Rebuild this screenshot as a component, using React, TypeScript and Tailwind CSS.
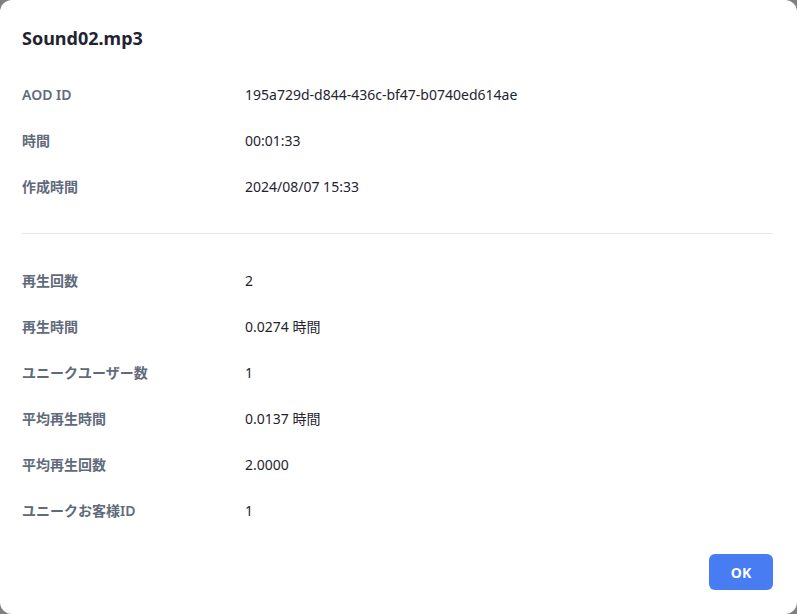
import React from "react";

const group1: [string, string][] = [
  ["AOD ID", "195a729d-d844-436c-bf47-b0740ed614ae"],
  ["時間", "00:01:33"],
  ["作成時間", "2024/08/07 15:33"],
];

const group2: [string, string][] = [
  ["再生回数", "2"],
  ["再生時間", "0.0274 時間"],
  ["ユニークユーザー数", "1"],
  ["平均再生時間", "0.0137 時間"],
  ["平均再生回数", "2.0000"],
  ["ユニークお客様ID", "1"],
];

function Row({ label, value }: { label: string; value: string }) {
  return (
    <div className="flex h-[46px] items-center pt-px">
      <div className="w-[223px] shrink-0 text-[14px] font-semibold text-[#5f6b7b]">{label}</div>
      <div className="text-[14px] text-[#1f2430]">{value}</div>
    </div>
  );
}

export default function App() {
  return (
    <div
      className="w-[797px] h-[614px] bg-[#808080]"
      style={{ fontFamily: '"Noto Sans", "Noto Sans CJK JP", sans-serif' }}
    >
      <div className="w-full h-full bg-white rounded-xl flex flex-col pl-[22px] pr-[24px] pt-[25px] pb-[24px]">
        <h1 className="text-[18px] leading-[26px] font-bold text-[#1f2430]">Sound02.mp3</h1>
        <div className="mt-[20px]">
          {group1.map(([l, v]) => (
            <Row key={l} label={l} value={v} />
          ))}
        </div>
        <div className="mt-[24px] mb-[23px] h-px bg-[#e5e7eb]" />
        <div>
          {group2.map(([l, v]) => (
            <Row key={l} label={l} value={v} />
          ))}
        </div>
        <div className="mt-auto flex justify-end">
          <button className="w-[64px] h-[36px] rounded-md bg-[#477cf3] text-white text-[14px] font-bold">
            OK
          </button>
        </div>
      </div>
    </div>
  );
}
